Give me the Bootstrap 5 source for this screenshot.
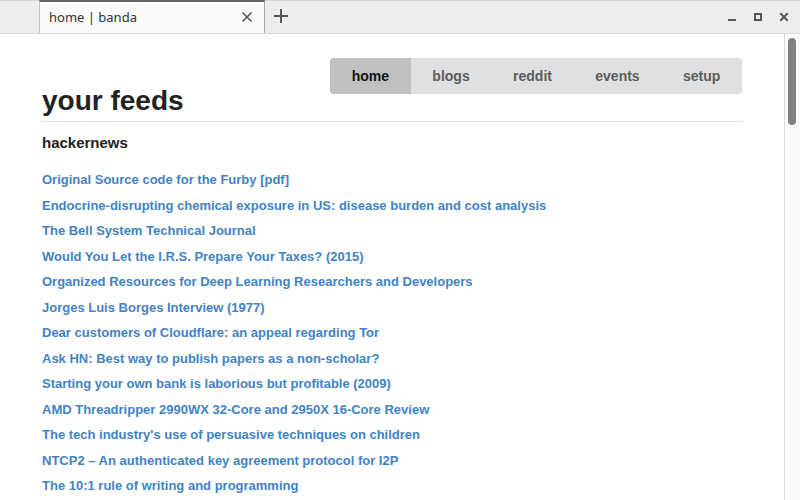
<!DOCTYPE html>
<html lang="en">
<head>
<meta charset="utf-8">
<meta name="viewport" content="width=device-width, initial-scale=1">
<title>home | banda</title>
<link href="https://cdn.jsdelivr.net/npm/bootstrap@5.3.0/dist/css/bootstrap.min.css" rel="stylesheet">
<style>
  body { font-family: "Liberation Sans", Arial, sans-serif; color: #222; background: #fff; }
  .titlebar { height: 34px; background: #ededed; border-top: 1px solid #d6d6d6; border-bottom: 1px solid #d9d9d9; padding-left: 39px; }
  .browser-tab { width: 226px; margin-top: -1px; padding: 0 9px 2px; background: #fafafa; border: solid #a3a3a3; border-width: 0 1px; border-left-color: #c4c4c4; border-top: 2px solid #666; font: 13px "Noto Sans", sans-serif; color: #333; }
  .icon-btn { border: 0; padding: 0; background: none; color: #555; display: flex; }
  .new-tab { margin-left: 9px; }
  .window-controls { gap: 14px; padding-right: 10px; }
  .feed-page { padding: 24px 42px 0; }
  .site-nav { min-width: 412px; background: #dfe0e2; border-radius: 4px; font-size: 14px; line-height: 20px; font-weight: bold; }
  .site-nav .nav-link { padding: 8px 21px; color: #5c5c5c; text-align: center; }
  .site-nav .nav-link.active { background: #bfc0c2; color: #111; }
  .site-nav .nav-item:first-child .nav-link { border-radius: 4px 0 0 4px; }
  .page-title { font-size: 28px; line-height: 32px; margin: -9px 0 0; padding-bottom: 4px; border-bottom: 1px solid #ddd; }
  .feed-name { font-size: 15px; line-height: 20px; margin: 11px 0 17px; }
  .feed-list { font-size: 13px; line-height: 1.5; font-weight: bold; }
  .feed-list li { margin-bottom: 6px; }
  .feed-list a { color: #4183c4; text-decoration: none; }
  .scroll-track { width: 16px; background: #fafafa; border-left: 1px solid #d9d9d9; padding: 4px 4px 0 3px; }
  .scroll-thumb { width: 8px; height: 87px; border-radius: 4px; background: #808080; }
</style>
</head>
<body>
<div class="d-flex flex-column vh-100 overflow-hidden">
  <header class="titlebar d-flex align-items-stretch flex-shrink-0">
    <div class="browser-tab d-flex align-items-center justify-content-between">
      <span>home | banda</span>
      <button class="icon-btn" type="button" aria-label="Close tab">
        <svg width="16" height="16" viewBox="0 0 16 16" fill="none" stroke="currentColor" stroke-width="1.6"><path d="M3.5 3.5l9 9M12.5 3.5l-9 9"/></svg>
      </button>
    </div>
    <button class="icon-btn new-tab align-items-center pb-1" type="button" aria-label="New tab">
      <svg width="14" height="16" viewBox="0 0 14 16" fill="none" stroke="currentColor" stroke-width="2"><path d="M0 9h14M7 2v14"/></svg>
    </button>
    <div class="window-controls d-flex align-items-center ms-auto">
      <button class="icon-btn" type="button" aria-label="Minimize"><svg width="12" height="12" viewBox="0 0 12 12"><path fill="currentColor" d="M2 8h8v2H2z"/></svg></button>
      <button class="icon-btn" type="button" aria-label="Maximize"><svg width="12" height="12" viewBox="0 0 12 12" fill="none" stroke="currentColor" stroke-width="2"><path d="M3 3h6v6H3z"/></svg></button>
      <button class="icon-btn" type="button" aria-label="Close window"><svg width="12" height="12" viewBox="0 0 12 12" fill="none" stroke="currentColor" stroke-width="2"><path d="M2.3 2.3l7.4 7.4M9.7 2.3l-7.4 7.4"/></svg></button>
    </div>
  </header>
  <div class="d-flex flex-grow-1 overflow-hidden">
    <main class="feed-page flex-grow-1">
      <nav class="d-flex justify-content-end" aria-label="Main">
        <ul class="site-nav nav">
          <li class="nav-item flex-grow-1"><a class="nav-link active" aria-current="page" href="#">home</a></li>
          <li class="nav-item flex-grow-1"><a class="nav-link" href="#">blogs</a></li>
          <li class="nav-item flex-grow-1"><a class="nav-link" href="#">reddit</a></li>
          <li class="nav-item flex-grow-1"><a class="nav-link" href="#">events</a></li>
          <li class="nav-item flex-grow-1"><a class="nav-link" href="#">setup</a></li>
        </ul>
      </nav>
      <h1 class="page-title fw-bold">your feeds</h1>
      <h2 class="feed-name fw-bold">hackernews</h2>
      <ul class="feed-list list-unstyled mb-0">
        <li><a href="#">Original Source code for the Furby [pdf]</a></li>
        <li><a href="#">Endocrine-disrupting chemical exposure in US: disease burden and cost analysis</a></li>
        <li><a href="#">The Bell System Technical Journal</a></li>
        <li><a href="#">Would You Let the I.R.S. Prepare Your Taxes? (2015)</a></li>
        <li><a href="#">Organized Resources for Deep Learning Researchers and Developers</a></li>
        <li><a href="#">Jorges Luis Borges Interview (1977)</a></li>
        <li><a href="#">Dear customers of Cloudflare: an appeal regarding Tor</a></li>
        <li><a href="#">Ask HN: Best way to publish papers as a non-scholar?</a></li>
        <li><a href="#">Starting your own bank is laborious but profitable (2009)</a></li>
        <li><a href="#">AMD Threadripper 2990WX 32-Core and 2950X 16-Core Review</a></li>
        <li><a href="#">The tech industry's use of persuasive techniques on children</a></li>
        <li><a href="#">NTCP2 – An authenticated key agreement protocol for I2P</a></li>
        <li><a href="#">The 10:1 rule of writing and programming</a></li>
      </ul>
    </main>
    <div class="scroll-track flex-shrink-0" aria-hidden="true"><div class="scroll-thumb"></div></div>
  </div>
</div>
<script src="https://cdn.jsdelivr.net/npm/bootstrap@5.3.0/dist/js/bootstrap.bundle.min.js"></script>
</body>
</html>
